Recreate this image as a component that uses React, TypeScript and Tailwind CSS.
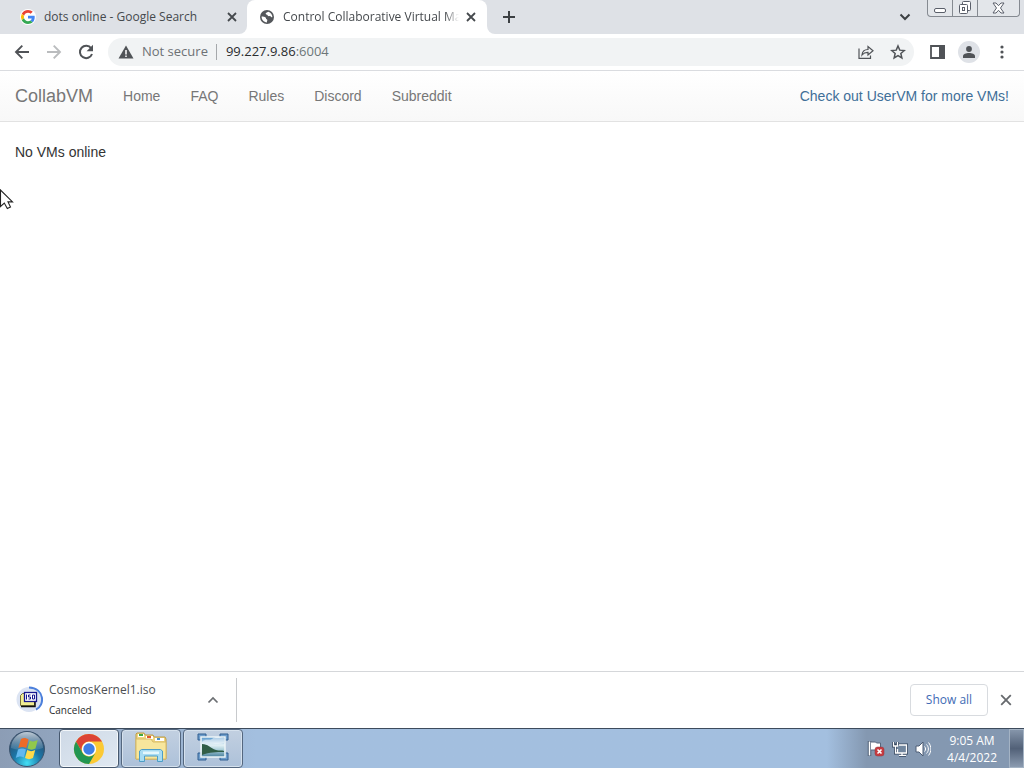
import React from "react";

const uiFont = "font-['Open_Sans','Noto_Sans',sans-serif]";

function CloseIcon({ size = 10, width = 1.8 }: { size?: number; width?: number }) {
  return (
    <svg width={size} height={size} viewBox="0 0 10 10" stroke="currentColor" strokeWidth={width} fill="none">
      <path d="M1 1l8 8M9 1L1 9" />
    </svg>
  );
}

function GoogleIcon() {
  return (
    <svg width="16" height="16" viewBox="0 0 48 48">
      <circle cx="24" cy="24" r="24" fill="#fff" />
      <g transform="translate(3 3) scale(.875)">
        <path fill="#ea4335" d="M24 9.500c3.500 0 6.700 1.200 9.200 3.600l6.900-6.900C35.900 2.400 30.500 0 24 0 14.600 0 6.500 5.400 2.600 13.200l8 6.200C12.400 13.700 17.700 9.500 24 9.500z" />
        <path fill="#4285f4" d="M47 24.500c0-1.600-.2-3.100-.4-4.500H24v9h12.900c-.6 3-2.300 5.500-4.800 7.200l7.700 6C44.400 38 47 31.800 47 24.500z" />
        <path fill="#fbbc05" d="M10.500 28.600A14.500 14.500 0 0 1 10.500 19.400l-8-6.200a24 24 0 0 0 0 21.600l8-6.200z" />
        <path fill="#34a853" d="M24 48c6.500 0 11.900-2.100 15.900-5.800l-7.700-6c-2.200 1.500-4.900 2.300-8.200 2.300-6.300 0-11.600-4.200-13.500-9.900l-8 6.200C6.500 42.600 14.600 48 24 48z" />
      </g>
    </svg>
  );
}

function GlobeIcon() {
  return (
    <svg width="16" height="16" viewBox="0 0 16 16">
      <circle cx="8" cy="8" r="7" fill="#54575b" />
      <path fill="#fff" d="M2.600 7.600c1.400.1 3.300.2 4 .9.600.6.2 1.400 1 1.800.8.400.9 1 .5 1.700-.2.500-.3.900-.2 1.400C4.700 13.300 2.500 10.700 2.600 7.600zM9.300 2.800c-.9.300-1.100.8-1.900 1-.8.300-.9.900-.4 1.400.6.500 1.100.3 1.500 1 .4.800 1.200 1.100 2 .9.700-.1 1.200.500 1.700 1 .4.400.9.300 1.200-.1-.1-2.400-1.700-4.500-4.100-5.200z" />
    </svg>
  );
}

function TabStrip() {
  return (
    <header className="flex h-[34px] shrink-0 bg-white text-xs text-[#45494d]">
      <div className="flex w-[247px] items-center rounded-br-lg bg-[#dee1e6] pl-5 pr-[7px]">
        <GoogleIcon />
        <a href="#search" className="ml-2 flex-1 truncate">dots online - Google Search</a>
        <button aria-label="Close dots online tab" className="grid size-4 place-items-center"><CloseIcon /></button>
      </div>
      <div className="w-[240px] bg-linear-to-b from-[#dee1e6] from-50% to-white to-50%">
        <div className="flex h-full items-center rounded-t-lg bg-white pl-3 pr-2">
          <GlobeIcon />
          <a href="#control" className="ml-2 flex-1 overflow-hidden whitespace-nowrap mask-r-from-92% mask-r-to-100%">
            Control Collaborative Virtual Machines
          </a>
          <button aria-label="Close Control tab" className="ml-1 grid size-4 place-items-center"><CloseIcon /></button>
        </div>
      </div>
      <div className="flex flex-1 items-center rounded-bl-lg bg-[#dee1e6]">
        <button aria-label="New tab" className="ml-4 grid size-3 place-items-center text-[#3c4043]">
          <svg width="12" height="12" viewBox="0 0 12 12" stroke="currentColor" strokeWidth="2"><path d="M6 0v12M0 6h12" /></svg>
        </button>
        <button aria-label="Search tabs" className="ml-auto mr-4 text-[#3c4043]">
          <svg width="12" height="8" viewBox="0 0 12 8" fill="none" stroke="currentColor" strokeWidth="2"><path d="M1.500 1.500L6 6l4.500-4.500" /></svg>
        </button>
        <div className="mr-1 flex h-[17px] self-start rounded-b border border-t-0 border-[#858a91] bg-[#e3e6ea] text-[#5a5f6a]">
          <button aria-label="Minimize" className="grid w-[25px] place-items-center border-r border-[#858a91]">
            <svg width="12" height="16" viewBox="0 0 12 16"><rect x=".5" y="8.500" width="11" height="4" rx="1.500" fill="#fff" stroke="currentColor" /></svg>
          </button>
          <button aria-label="Restore" className="grid w-[25px] place-items-center border-r border-[#858a91]">
            <svg width="14" height="14" viewBox="0 0 14 14" fill="#fff" stroke="currentColor"><rect x="4.500" y=".5" width="8" height="9" rx="1" /><rect x="1.500" y="3.500" width="8" height="9" rx="1" /><rect x="4.500" y="6.500" width="2" height="3" /></svg>
          </button>
          <button aria-label="Close window" className="grid w-[41px] place-items-center">
            <svg width="13" height="12" viewBox="0 0 13 12" fill="#fff" stroke="currentColor"><path d="M1 1h3l2.500 2.700L9 1h3L8.500 6l3.500 5H9L6.500 8.300 4 11H1l3.500-5z" /></svg>
          </button>
        </div>
      </div>
    </header>
  );
}

function Toolbar() {
  return (
    <div className="flex h-[37px] shrink-0 items-center border-b border-[#dadce0] bg-white text-[#505357]">
      <div className="flex items-center gap-4 pl-[14px]">
        <button aria-label="Back" className="size-4">
          <svg width="16" height="16" viewBox="0 0 16 16" fill="none" stroke="currentColor" strokeWidth="1.900"><path d="M15 8H2.500M8.300 1.700L2 8l6.300 6.300" /></svg>
        </button>
        <button aria-label="Forward" className="size-4 text-[#babcbe]">
          <svg width="16" height="16" viewBox="0 0 16 16" fill="none" stroke="currentColor" strokeWidth="1.900"><path d="M1 8h12.500M7.700 1.700L14 8l-6.300 6.300" /></svg>
        </button>
        <button aria-label="Reload" className="size-4">
          <svg width="16" height="16" viewBox="0 0 16 16"><path d="M13.200 4.300A6.200 6.200 0 1 0 14 10" fill="none" stroke="currentColor" strokeWidth="2" /><path d="M15 .8v6.400H8.600z" fill="currentColor" /></svg>
        </button>
      </div>
      <div className="ml-[14px] flex h-7 flex-1 items-center rounded-full bg-[#f1f3f4] pl-[10px] pr-2 text-[13px]">
        <svg width="16" height="16" viewBox="0 0 16 16"><path d="M8 1.500L15.500 14.500H.5z" fill="currentColor" /><path d="M8 6v4.500M8 11.500V13" stroke="#fff" strokeWidth="1.500" /></svg>
        <span className="ml-2 text-[#6d7175]">Not secure</span>
        <span className="ml-2 h-4 w-px bg-[#a5a8ab]" />
        <a href="#address" className="ml-[9px] flex-1 text-[#2a2c2e]">99.227.9.86<span className="text-[#6d7678]">:6004</span></a>
        <button aria-label="Share" className="size-4">
          <svg width="16" height="16" viewBox="0 0 16 16" fill="none" stroke="currentColor" strokeWidth="1.200"><path d="M1 4.500v9.800h11.500V11.500M4 11c.3-3.700 2.500-5.400 6-5.500V2.600L15 6.800 10 11V8.300C7.500 8.200 5.600 9 4 11z" /></svg>
        </button>
        <button aria-label="Bookmark" className="ml-4 size-4">
          <svg width="16" height="16" viewBox="0 0 16 16" fill="none" stroke="currentColor" strokeWidth="1.500"><path d="M8 2l1.750 4.150 4.500.4-3.400 2.950 1 4.400L8 11.600l-3.850 2.300 1-4.400-3.400-2.950 4.500-.4z" /></svg>
        </button>
      </div>
      <div className="flex items-center pl-4 pr-4">
        <button aria-label="Side panel">
          <svg width="15" height="14" viewBox="0 0 15 14"><path d="M1 1h13v12H1z" fill="none" stroke="currentColor" strokeWidth="1.800" /><path d="M9 0h6v14H9z" fill="currentColor" /></svg>
        </button>
        <button aria-label="Profile" className="ml-[13px] grid size-[22px] place-items-center rounded-full bg-[#dfe2e7]">
          <svg width="12" height="12" viewBox="0 0 12 12" fill="currentColor"><circle cx="6" cy="3" r="2.900" /><path d="M0 12V10c0-2 3-3.100 6-3.100S12 8 12 10v2z" /></svg>
        </button>
        <button aria-label="Menu" className="ml-4">
          <svg width="12" height="14" viewBox="0 0 12 14" fill="currentColor"><circle cx="6" cy="2" r="1.600" /><circle cx="6" cy="7" r="1.600" /><circle cx="6" cy="12" r="1.600" /></svg>
        </button>
      </div>
    </div>
  );
}

const links = ["Home", "FAQ", "Rules", "Discord", "Subreddit"];

function Page() {
  return (
    <div className="flex flex-1 flex-col bg-white font-['Liberation_Sans',Arial,sans-serif] text-sm text-[#333]">
      <nav className="flex h-[51px] items-center border-b border-[#e2e2e2] bg-linear-to-b from-white to-[#f8f8f8] px-[15px] text-[#777]">
        <a href="#top" className="mr-[30px] text-lg">CollabVM</a>
        <div className="flex gap-[30px]">
          {links.map((l) => <a key={l} href={"#" + l.toLowerCase()}>{l}</a>)}
        </div>
        <a href="#uservm" className="ml-auto text-[#406f98]">Check out UserVM for more VMs!</a>
      </nav>
      <main className="relative flex-1 px-[15px] pt-5">
        <p>No VMs online</p>
        <svg className="absolute left-0 top-[67px]" width="14" height="22" viewBox="0 0 14 22">
          <path d="M.5 1v16.500l3.800-3.400 3 5.400 3.200-1.600-2.500-5h4.500z" fill="#fff" stroke="#222" strokeWidth="1.100" />
        </svg>
      </main>
    </div>
  );
}

function Downloads() {
  return (
    <section aria-label="Downloads" className="flex h-[57px] shrink-0 items-center border-t border-[#d5d7da] bg-white pb-px text-[#4c4f53]">
      <div className="flex h-11 w-[237px] items-center border-r border-[#c8cacd] pl-4 pr-[17px]">
        <svg width="27" height="27" viewBox="0 0 27 27">
          <circle cx="13" cy="13.500" r="12.500" fill="#dce4f3" />
          <path d="M13 1.500C29 2 29 20 20 23.500" fill="none" stroke="#4c80dc" strokeWidth="2" />
          <path d="M4.500 19.500V9.500l2-2h12v12z" fill="#f2ee92" stroke="#77733a" />
          <path d="M5 20.500h14V16" fill="none" stroke="#111" strokeWidth="1.500" />
          <rect x="8.500" y="6.500" width="12" height="9" fill="#fff" stroke="#18188e" strokeWidth="1.300" />
          <path d="M10.500 8.500v5M14.500 9h-2v2h2v2h-2M16.500 9h2v4h-2z" fill="none" stroke="#18188e" />
        </svg>
        <div className="ml-[6px] flex-1">
          <p className="text-xs leading-5">CosmosKernel1.iso</p>
          <p className="text-[10px] leading-5 text-[#292b2d]">Canceled</p>
        </div>
        <button aria-label="Download options">
          <svg width="12" height="8" viewBox="0 0 12 8" fill="none" stroke="#6b6e72" strokeWidth="1.700"><path d="M1.500 6.500L6 2l4.500 4.500" /></svg>
        </button>
      </div>
      <button className="ml-auto h-8 w-[78px] rounded border border-[#d8dbdf] text-xs font-medium text-[#416bb5]">Show all</button>
      <button aria-label="Close downloads" className="ml-3 mr-3 text-[#66696d]"><CloseIcon size={12} width={1.5} /></button>
    </section>
  );
}

function WindowsIcon() {
  return (
    <svg width="38" height="38" viewBox="0 0 38 38">
      <defs>
        <radialGradient id="orb" cx="50%" cy="90%" r="80%"><stop offset="0" stopColor="#43dff5" /><stop offset=".5" stopColor="#1b76a7" /><stop offset="1" stopColor="#2c4a6b" /></radialGradient>
        <linearGradient id="shine" x2="0" y2="1"><stop offset="0" stopColor="#eff6fa" stopOpacity=".75" /><stop offset="1" stopColor="#a9c7db" stopOpacity=".15" /></linearGradient>
      </defs>
      <circle cx="19" cy="19" r="17.500" fill="url(#orb)" stroke="#3b536d" />
      <path d="M3 18a16 16 0 0 1 32 0c-8 3-24 3-32 0z" fill="url(#shine)" />
      <path d="M13 9c3-1.500 5-1 7.500.500l-2.200 8.500c-3-1.500-5-1.500-8 0z" fill="#ec6b28" />
      <path d="M21.700 10.500c3 1.500 5 1 8-.5l-2.200 8.500c-3 1.500-5 1.500-8 0z" fill="#91c84c" />
      <path d="M10 19.500c3-1.500 5-1.500 8 0l-2.200 8c-3-1.500-5-1-8 .5z" fill="#62b8ef" />
      <path d="M19.200 20c3 1.500 5 1.500 8 0l-2.200 8c-3 1.500-5 1.500-8 0z" fill="#ffda4b" />
    </svg>
  );
}

function ChromeIcon() {
  return (
    <svg width="32" height="32" viewBox="0 0 32 32">
      <circle cx="16" cy="16" r="15" fill="#fbc934" />
      <path d="M3 8.500A15 15 0 0 1 29 8.500H16a7.500 7.500 0 0 0-6.500 11.200z" fill="#dc4335" />
      <path d="M3 8.500A15 15 0 0 0 16 31l6.500-11.200A7.500 7.500 0 0 1 9.500 19.700z" fill="#229652" />
      <circle cx="16" cy="16" r="7.200" fill="#fff" /><circle cx="16" cy="16" r="5.700" fill="#3f7ee5" />
    </svg>
  );
}

function FolderIcon() {
  return (
    <svg width="34" height="32" viewBox="0 0 34 32">
      <path d="M2 3l1-1h7l1 2h8l1 2h11l1 2v20H2z" fill="#efd680" stroke="#bd9c48" />
      <path d="M4 3h6v3H4zM12 5h7v3h-7zM21 7h9v3h-9z" fill="#fff" />
      <path d="M5 3h4v2H5z" fill="#40a83f" /><path d="M13 5h4v2h-4z" fill="#dd5730" /><path d="M23 7h3v2h-3z" fill="#4b8fc6" />
      <path d="M2 8h15l2 3h13v17H2z" fill="#f7e69c" stroke="#d8bb66" />
      <path d="M5.500 30.500V20l2-1.500h19l2 1.500v10.500h-5V25h-13v5.500z" fill="#a8dcf2" stroke="#4e9ec7" />
      <path d="M9 20.500h16v2.500H9z" fill="#e4f7fc" />
    </svg>
  );
}

function PictureIcon() {
  return (
    <svg width="32" height="28" viewBox="0 0 32 28">
      <defs><linearGradient id="scene" x2="0" y2="1"><stop offset="0" stopColor="#4f93ca" /><stop offset=".4" stopColor="#e5f2f6" /><stop offset=".65" stopColor="#a9cdd8" /><stop offset="1" stopColor="#477f9c" /></linearGradient></defs>
      <path d="M1 1h8v6H1zM23 1h8v6h-8zM1 20h8v7H1zM23 20h8v7h-8z" fill="#6d9dcb" stroke="#315f91" />
      <path d="M4 4h24v20H4z" fill="url(#scene)" stroke="#edf5f8" strokeWidth="1.500" />
      <path d="M5 11c6 0 8 4 14 6 3 1 6 0 8 1v1c-8 0-14 0-22 3z" fill="#315e47" />
      <path d="M5 9c3-4 7-1 10-3 3-3 7-2 12-1v5c-7 2-12 0-22 1z" fill="#fff" opacity=".5" />
    </svg>
  );
}

const apps = [
  { name: "Google Chrome", icon: <ChromeIcon /> },
  { name: "Windows Explorer", icon: <FolderIcon /> },
  { name: "Pictures", icon: <PictureIcon /> },
];

function Taskbar() {
  return (
    <footer className="flex h-10 shrink-0 border-t border-[#3d4b5c] bg-linear-to-r from-[#8c9db5] from-0% via-[#a3bfdf] via-25% to-[#a3bfdf] to-80% text-white">
      <button aria-label="Start" className="grid w-[58px] place-items-center pr-1"><WindowsIcon /></button>
      <div className="flex gap-[2px] pl-px">
        {apps.map((app, i) => (
          <button key={app.name} aria-label={app.name} className={i === 0
            ? "grid w-[60px] place-items-center rounded border border-[#46586e] bg-linear-to-br from-[#ced9e6] to-[#e0e9f2] shadow-[inset_0_0_0_1px_#f3f7fa]"
            : "grid w-[60px] place-items-center rounded border border-[#54677f] bg-linear-to-b from-[#c2d0e1] to-[#adc1d9] pb-1 shadow-[inset_0_0_0_1px_#d5e1ed]"}>
            {app.icon}
          </button>
        ))}
      </div>
      <div className="ml-auto flex items-center bg-linear-to-r from-transparent to-[#8498b1] to-20% pl-10">
        <button aria-label="Action Center" className="mr-[7px]">
          <svg width="18" height="18" viewBox="0 0 18 18"><path d="M2.500 1v15" stroke="#4c5d74" strokeWidth="3.500" /><path d="M3.500 2h5l1 1h4v7H3.500z" fill="#fff" stroke="#59677d" /><path d="M2.500 1.500v14" stroke="#fff" strokeWidth="1.500" /><rect x="8" y="7" width="9" height="9" rx="2.500" fill="#c83b40" stroke="#8f3841" strokeWidth=".5" /><path d="M10.500 9.500l4 4m0-4l-4 4" stroke="#fff" strokeWidth="1.600" /></svg>
        </button>
        <button aria-label="Network" className="mr-[7px]">
          <svg width="16" height="16" viewBox="0 0 16 16" fill="none"><path d="M4.500 4h10v8h-10zM10 12v2M7 14.300h7M1.500 1v4h4V1M3.500 6v6h1" stroke="#34465e" strokeWidth="3" /><path d="M5 4h9v8H5z" fill="#71869e" /><path d="M7 4h7.500v8h-9V8M10 12v2M7 14.300h7M1.500 1v4h4V1M3.500 5v7h2" stroke="#fff" strokeWidth="1.300" /></svg>
        </button>
        <button aria-label="Volume" className="mr-4">
          <svg width="16" height="16" viewBox="0 0 16 16" fill="none"><path d="M1 5h3l4-4v14l-4-4H1z" fill="#fff" stroke="#4c5d74" /><path d="M9.500 5.500c1.500 1.500 1.500 3.500 0 5M11.500 3.500c2.500 2.500 2.500 6.500 0 9M13.500 1.500c3.200 4 3.200 9 0 13" stroke="#fff" /></svg>
        </button>
        <time className="mr-3 text-center text-xs leading-[17px]">9:05 AM<br />4/4/2022</time>
        <button aria-label="Show desktop" className="h-full w-[15px] border border-[#a4b3c4] bg-linear-to-b from-[#8595aa] via-[#526178] to-[#8b9bb0]" />
      </div>
    </footer>
  );
}

export default function App() {
  return (
    <div className={"flex min-h-screen flex-col bg-white " + uiFont}>
      <TabStrip />
      <Toolbar />
      <Page />
      <Downloads />
      <Taskbar />
    </div>
  );
}
